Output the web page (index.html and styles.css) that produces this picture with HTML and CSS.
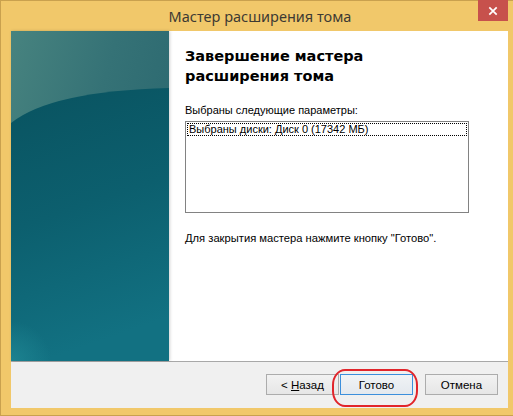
FILE: index.html
```html
<!DOCTYPE html>
<html lang="ru">
<head>
<meta charset="utf-8">
<title>Мастер расширения тома</title>
<link rel="stylesheet" href="styles.css">
</head>
<body>
<div class="window">
  <div class="titlebar">
    <span class="title">Мастер расширения тома</span>
    <div class="close"><svg width="10" height="10" viewBox="0 0 10 10"><path d="M1.3 1.3 L8.7 8.7 M8.7 1.3 L1.3 8.7" stroke="#fff" stroke-width="1.7"/></svg></div>
  </div>
  <div class="client">
    <div class="main">
      <div class="banner">
        <svg width="158" height="330" viewBox="0 0 158 330" preserveAspectRatio="none">
          <defs>
            <linearGradient id="up" x1="0" y1="0" x2="1" y2="0.6">
              <stop offset="0" stop-color="#47837f"/>
              <stop offset="0.5" stop-color="#357276"/>
              <stop offset="1" stop-color="#2a676f"/>
            </linearGradient>
            <linearGradient id="low" x1="0" y1="0" x2="0.2" y2="1">
              <stop offset="0" stop-color="#095360"/>
              <stop offset="0.5" stop-color="#0c5f6e"/>
              <stop offset="1" stop-color="#127182"/>
            </linearGradient>
            <radialGradient id="corner" cx="0" cy="1" r="0.5">
              <stop offset="0" stop-color="#1f8794" stop-opacity="0.8"/>
              <stop offset="1" stop-color="#1f8794" stop-opacity="0"/>
            </radialGradient>
          </defs>
          <rect width="158" height="330" fill="url(#up)"/>
          <path d="M0 92 Q40 60 158 57 L158 330 L0 330 Z" fill="url(#low)"/>
          <rect x="0" y="250" width="80" height="80" fill="url(#corner)"/>
        </svg>
      </div>
      <div class="content">
        <h1 class="heading">Завершение мастера<br>расширения тома</h1>
        <p class="label">Выбраны следующие параметры:</p>
        <div class="listbox">
          <div class="item">Выбраны диски: Диск 0 (17342 МБ)</div>
        </div>
        <p class="note">Для закрытия мастера нажмите кнопку "Готово".</p>
      </div>
    </div>
    <div class="footer">
      <button class="btn back">&lt; <u>Н</u>азад</button>
      <button class="btn finish">Готово</button>
      <button class="btn cancel">Отмена</button>
      <div class="highlight"></div>
    </div>
  </div>
</div>
</body>
</html>
```
FILE: styles.css
```css
html, body {
  margin: 0;
  padding: 0;
}
body {
  width: 513px;
  height: 416px;
  overflow: hidden;
  background: #f1c86a;
  font-family: "Liberation Sans", Arial, sans-serif;
}
.window {
  position: relative;
  box-sizing: border-box;
  width: 513px;
  height: 416px;
  background: #f1c86a;
  border: 1px solid #c9a14e;
  border-right: 0;
  display: flex;
  flex-direction: column;
}
.titlebar {
  height: 30px;
  display: flex;
  align-items: center;
  justify-content: center;
  padding-left: 6px;
}
.title {
  font-family: "Noto Sans", "Open Sans", sans-serif;
  font-size: 14.5px;
  color: #3d3a33;
  margin-top: -1px;
}
.close {
  position: absolute;
  top: -1px;
  left: 477px;
  width: 30px;
  height: 21px;
  background: #c7514c;
  display: flex;
  align-items: center;
  justify-content: center;
}
.client {
  margin: 0 5px 0 10px;
  height: 377px;
  display: flex;
  flex-direction: column;
}
.main {
  height: 330px;
  display: flex;
  background: #fff;
  border-bottom: 1px solid #a8a8a8;
}
.banner {
  width: 158px;
  height: 330px;
  flex: none;
  box-shadow: 1px 0 3px rgba(0, 0, 0, 0.18);
  position: relative;
}
.banner svg {
  display: block;
}
.content {
  padding: 15px 0 0 16px;
  flex: 1;
}
.heading {
  margin: 0;
  font-family: "DejaVu Sans", Verdana, sans-serif;
  font-weight: bold;
  font-size: 14.5px;
  line-height: 20px;
  color: #000;
}
.label {
  margin: 18px 0 0;
  font-size: 11px;
  line-height: 13px;
  color: #000;
}
.listbox {
  margin-top: 4px;
  width: 281px;
  height: 89px;
  border: 1px solid #828282;
  padding: 1px 0 0 1px;
  box-sizing: content-box;
}
.item {
  border: 1px dotted #000;
  height: 11px;
  line-height: 11px;
  font-size: 11px;
  padding: 0 0 0 1px;
  margin-right: 1px;
  color: #000;
}
.note {
  margin: 19px 0 0;
  font-size: 11.2px;
  line-height: 13px;
  color: #000;
}
.footer {
  position: relative;
  flex: 1;
  background: #f0f0f0;
  display: flex;
  justify-content: flex-end;
  align-items: flex-start;
  padding: 12px 10px 0 0;
}
.btn {
  box-sizing: border-box;
  width: 73px;
  height: 21px;
  padding: 0;
  font-family: "Liberation Sans", Arial, sans-serif;
  font-size: 11.5px;
  color: #000;
  border: 1px solid #acacac;
  background: linear-gradient(#f2f2f2, #e6e6e6);
  border-radius: 0;
}
.btn u {
  text-decoration: underline;
}
.finish {
  margin-left: 1px;
  border-color: #3c8fdc;
  background: linear-gradient(#f0f3f6, #e4e9ee);
}
.cancel {
  margin-left: 12px;
}
.highlight {
  position: absolute;
  left: 321px;
  top: 7px;
  width: 82px;
  height: 34px;
  border: 2.5px solid #e1252b;
  border-radius: 13px / 16px;
}
```
